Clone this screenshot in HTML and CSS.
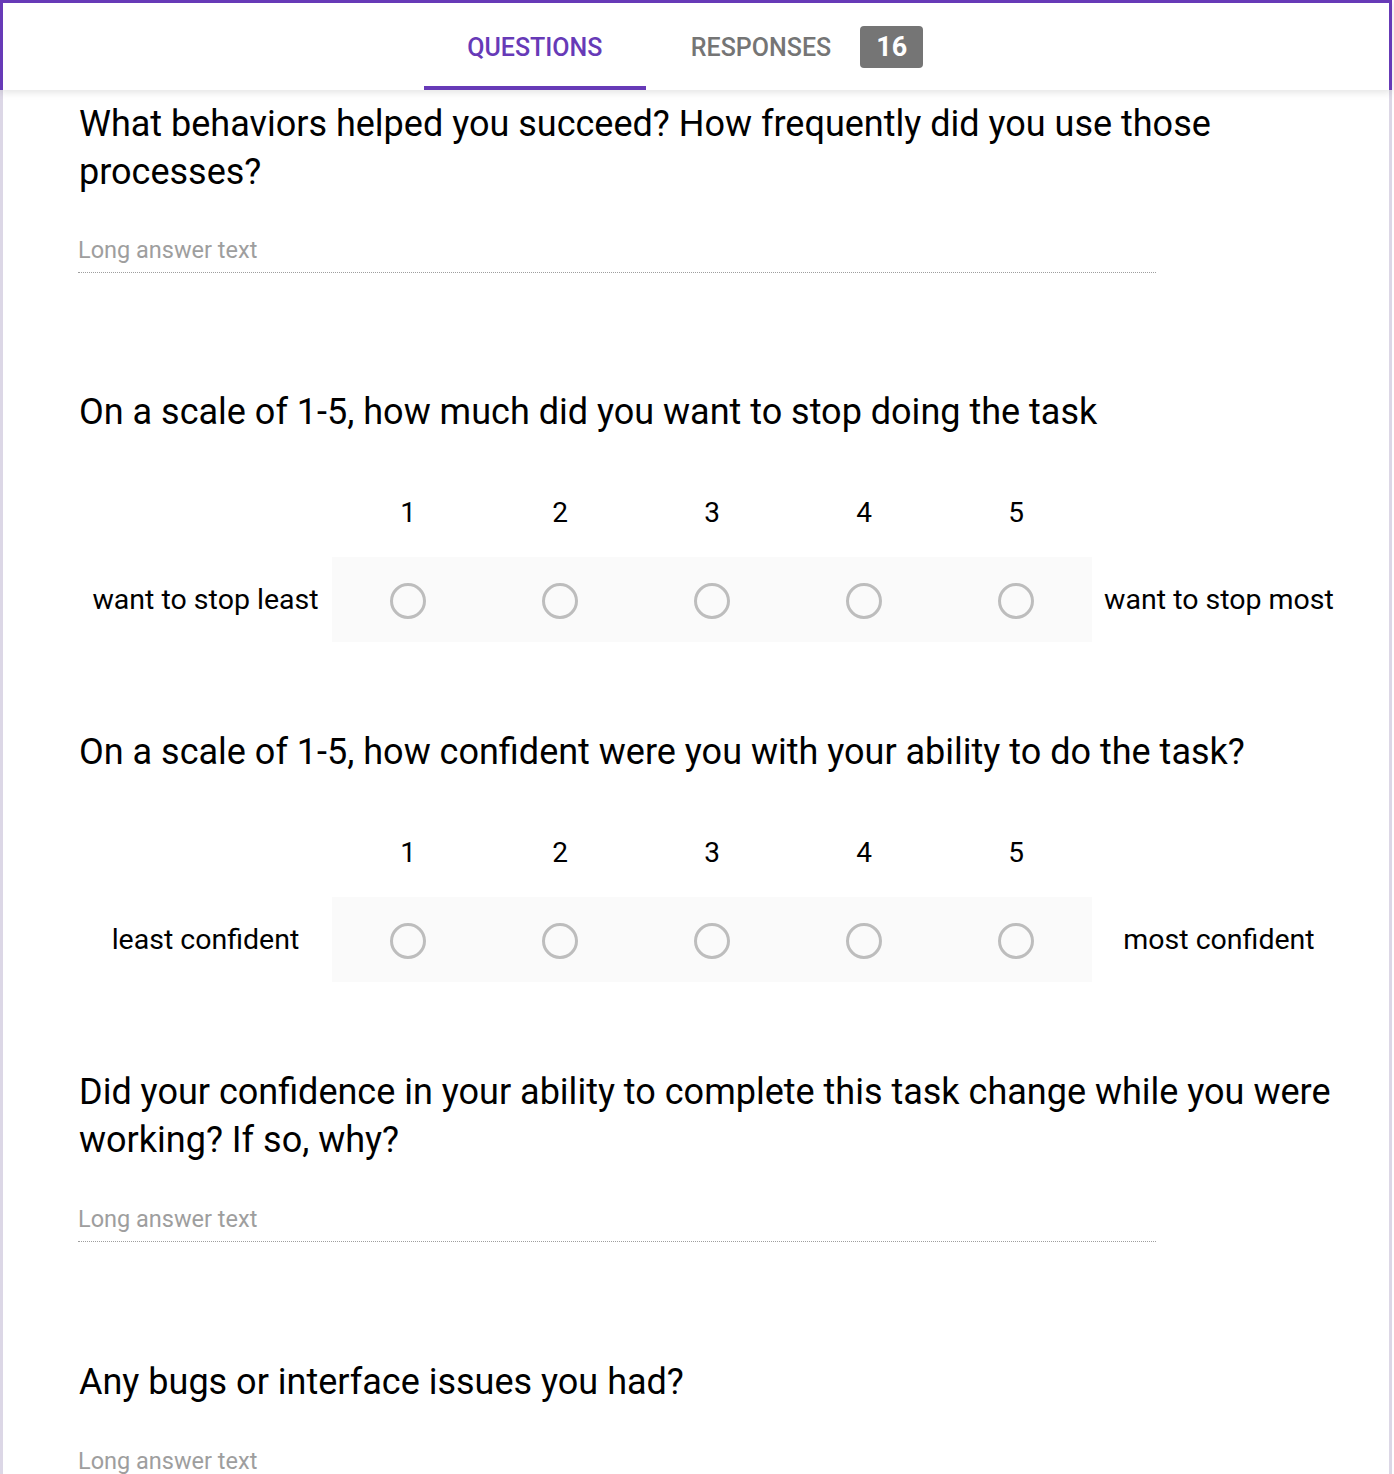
FILE: index.html
```html
<!DOCTYPE html>
<html>
<head>
<meta charset="utf-8">
<link rel="stylesheet" href="styles.css">
</head>
<body>
<div class="frame">
  <header class="header">
    <nav class="tabs">
      <div class="tab tab-active">QUESTIONS</div>
      <div class="tab tab-resp">RESPONSES <span class="badge">16</span></div>
    </nav>
  </header>
  <main class="content">
    <section class="q q-long">
      <h2 class="q-title">What behaviors helped you succeed? How frequently did you use those processes?</h2>
      <div class="answer">Long answer text</div>
    </section>

    <section class="q q-scale">
      <h2 class="q-title">On a scale of 1-5, how much did you want to stop doing the task</h2>
      <div class="scale">
        <div class="scale-nums">
          <span></span><span>1</span><span>2</span><span>3</span><span>4</span><span>5</span><span></span>
        </div>
        <div class="scale-row">
          <div class="scale-label">want to stop least</div>
          <div class="band">
            <div class="cell"><span class="radio"></span></div>
            <div class="cell"><span class="radio"></span></div>
            <div class="cell"><span class="radio"></span></div>
            <div class="cell"><span class="radio"></span></div>
            <div class="cell"><span class="radio"></span></div>
          </div>
          <div class="scale-label">want to stop most</div>
        </div>
      </div>
    </section>

    <section class="q q-scale">
      <h2 class="q-title">On a scale of 1-5, how confident were you with your ability to do the task?</h2>
      <div class="scale">
        <div class="scale-nums">
          <span></span><span>1</span><span>2</span><span>3</span><span>4</span><span>5</span><span></span>
        </div>
        <div class="scale-row">
          <div class="scale-label">least confident</div>
          <div class="band">
            <div class="cell"><span class="radio"></span></div>
            <div class="cell"><span class="radio"></span></div>
            <div class="cell"><span class="radio"></span></div>
            <div class="cell"><span class="radio"></span></div>
            <div class="cell"><span class="radio"></span></div>
          </div>
          <div class="scale-label">most confident</div>
        </div>
      </div>
    </section>

    <section class="q q-long">
      <h2 class="q-title">Did your confidence in your ability to complete this task change while you were working? If so, why?</h2>
      <div class="answer">Long answer text</div>
    </section>

    <section class="q q-long">
      <h2 class="q-title">Any bugs or interface issues you had?</h2>
      <div class="answer">Long answer text</div>
    </section>
  </main>
</div>
</body>
</html>
```
FILE: styles.css
```css
html, body {
  margin: 0;
  padding: 0;
  background: #fff;
}
body {
  font-family: Roboto, "Noto Sans", Arial, sans-serif;
  color: #000;
  height: 1474px;
  overflow: hidden;
}
.frame {
  width: 1392px;
  height: 1474px;
  box-sizing: border-box;
  border-left: 3px solid #dcd7e6;
  border-right: 3px solid #dcd7e6;
}
.header {
  margin: 0 -3px;
  height: 90px;
  box-sizing: border-box;
  border-top: 3px solid #673ab7;
  border-left: 3px solid #673ab7;
  border-right: 3px solid #673ab7;
  background: #fff;
  display: flex;
  justify-content: center;
  box-shadow: 0 2px 8px rgba(0,0,0,0.12);
  position: relative;
  z-index: 2;
}
.tabs {
  display: flex;
  height: 87px;
}
.tab {
  display: flex;
  align-items: center;
  box-sizing: border-box;
  padding: 5px 45px 4px 45px;
  font-size: 25px;
  font-weight: 500;
  color: #757575;
}
.tab-active {
  color: #673ab7;
  border-bottom: 4px solid #673ab7;
  padding: 5px 0 0 0;
  width: 222px;
  justify-content: center;
}
.badge {
  display: inline-flex;
  align-items: center;
  justify-content: center;
  margin-left: 29px;
  width: 63px;
  height: 42px;
  border-radius: 4px;
  background: #757575;
  color: #fff;
  font-size: 27px;
  font-weight: 700;
}
.content {
  padding: 10px 44px 0 76px;
}
.q-title {
  margin: 0;
  font-size: 36px;
  font-weight: 400;
  line-height: 48px;
}
.answer {
  width: 1078px;
  margin-left: -1px;
  margin-top: 39px;
  font-size: 23.5px;
  line-height: 30px;
  color: #9e9e9e;
  padding-bottom: 7px;
  border-bottom: 1px dotted #9e9e9e;
}
.q:nth-child(2) { margin-top: 115px; }
.q:nth-child(3) { margin-top: 86px; }
.q:nth-child(4) { margin-top: 86px; }
.q:nth-child(5) { margin-top: 116px; }
.q:nth-child(4) .answer { margin-top: 40px; }
.q:nth-child(5) .answer { margin-top: 40px; }
.scale-nums {
  display: grid;
  grid-template-columns: 253px repeat(5, 152px) 254px;
  margin-top: 62px;
  font-size: 28px;
  line-height: 30px;
  text-align: center;
}
.scale-row {
  display: grid;
  grid-template-columns: 253px 760px 254px;
  margin-top: 29px;
  align-items: center;
}
.scale-label {
  text-align: center;
  font-size: 28.5px;
  line-height: 30px;
}
.band {
  display: grid;
  grid-template-columns: repeat(5, 152px);
  height: 85px;
  background: #fafafa;
  align-items: center;
}
.cell {
  display: flex;
  justify-content: center;
  align-items: center;
  padding-top: 3px;
}
.radio {
  display: block;
  width: 30px;
  height: 30px;
  border: 3px solid #bdbdbd;
  border-radius: 50%;
}
```
